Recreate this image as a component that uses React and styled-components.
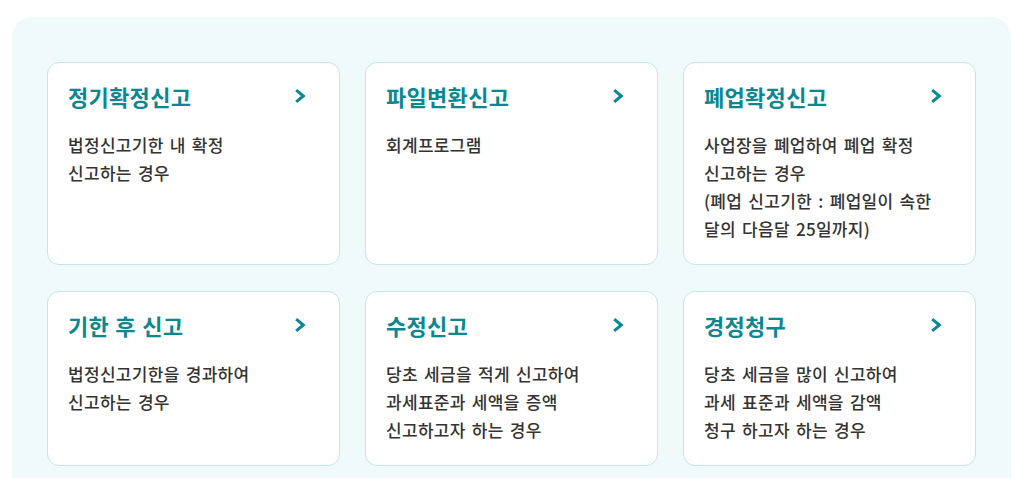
import React from "react";
import styled, { createGlobalStyle } from "styled-components";

const Global = createGlobalStyle`
  html, body { margin: 0; padding: 0; background: #ffffff; }
  body { font-family: "Noto Sans CJK KR", "Noto Sans", sans-serif; }
  * { box-sizing: border-box; }
`;

const Page = styled.div`
  padding: 17px 8px 0 12px;
  height: 478px;
  overflow: hidden;
`;

const Panel = styled.section`
  width: 999px;
  background: #f1fafa;
  border-radius: 20px;
  padding: 45px 35px 40px;
`;

const Grid = styled.div`
  display: grid;
  grid-template-columns: repeat(3, 293px);
  column-gap: 25px;
  row-gap: 26px;
`;

const Card = styled.a`
  display: flex;
  flex-direction: column;
  background: #ffffff;
  border: 1px solid #c5e5e9;
  border-radius: 12px;
  padding: 18px 20px 21px 20px;
  text-decoration: none;
`;

const Head = styled.div`
  display: flex;
  align-items: center;
  justify-content: space-between;
  height: 30px;
`;

const Title = styled.h3`
  margin: 0;
  font-size: 22px;
  font-weight: 700;
  color: #0b8792;
  letter-spacing: 0.3px;
  word-spacing: 1px;
  line-height: 30px;
`;

const Arrow = styled.svg`
  width: 14px;
  height: 16px;
  margin-right: 12px;
  flex: none;
`;

const Desc = styled.p`
  margin: 20px 0 0;
  font-size: 17px;
  font-weight: 500;
  line-height: 28px;
  color: #333333;
  letter-spacing: 0.3px;
  word-spacing: 2px;
  white-space: pre-line;
`;

const items = [
  { t: "정기확정신고", d: "법정신고기한 내 확정\n신고하는 경우" },
  { t: "파일변환신고", d: "회계프로그램" },
  { t: "폐업확정신고", d: "사업장을 폐업하여 폐업 확정\n신고하는 경우\n(폐업 신고기한 : 폐업일이 속한\n달의 다음달 25일까지)" },
  { t: "기한 후 신고", d: "법정신고기한을 경과하여\n신고하는 경우" },
  { t: "수정신고", d: "당초 세금을 적게 신고하여\n과세표준과 세액을 증액\n신고하고자 하는 경우" },
  { t: "경정청구", d: "당초 세금을 많이 신고하여\n과세 표준과 세액을 감액\n청구 하고자 하는 경우" },
];

const Chevron = () => (
  <Arrow viewBox="0 0 14 16" aria-hidden="true">
    <path d="M3.2 2.2 L10.3 8 L3.2 13.8" fill="none" stroke="#0b8792" strokeWidth="3" strokeLinecap="butt" strokeLinejoin="miter" />
  </Arrow>
);

export default function App() {
  return (
    <>
      <Global />
      <Page>
        <Panel>
          <Grid>
            {items.map((it) => (
              <Card key={it.t} href="#">
                <Head>
                  <Title>{it.t}</Title>
                  <Chevron />
                </Head>
                <Desc>{it.d}</Desc>
              </Card>
            ))}
          </Grid>
        </Panel>
      </Page>
    </>
  );
}
